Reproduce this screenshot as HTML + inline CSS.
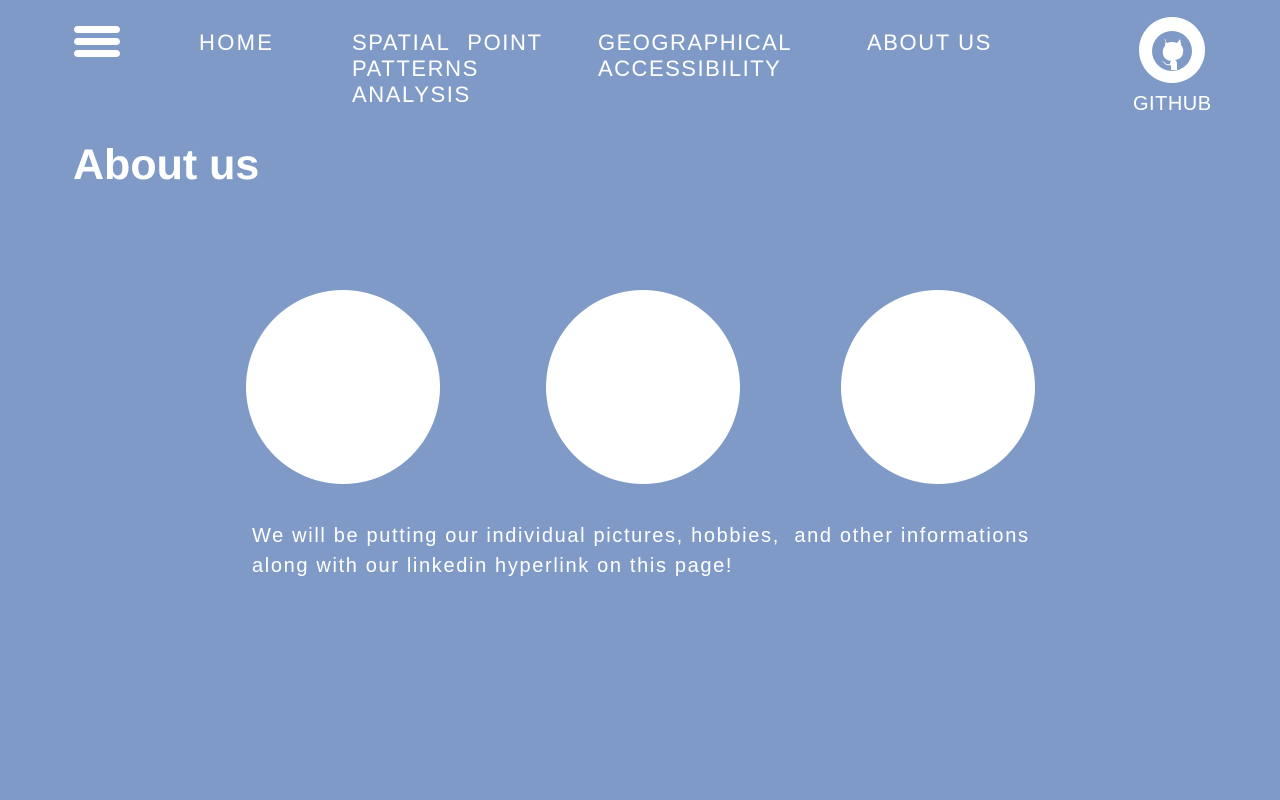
<!DOCTYPE html>
<html><head><meta charset="utf-8"><style>
body{margin:0;width:1280px;height:800px;background:#7f9ac6;font-family:"Liberation Sans",sans-serif;color:#fff;position:relative;overflow:hidden}
.a{position:absolute}
.bar{position:absolute;left:74px;width:46px;height:7px;background:#fff;border-radius:4px}
.nav{position:absolute;top:30px;font-size:22px;line-height:26px;letter-spacing:1.6px}
.c{position:absolute;top:290px;width:194px;height:194px;border-radius:50%;background:#fff}
</style></head><body>
<div class="bar" style="top:26px"></div>
<div class="bar" style="top:38px"></div>
<div class="bar" style="top:50px"></div>
<div class="nav" style="left:199px;letter-spacing:2.3px">HOME</div>
<div class="nav" style="left:352px;width:220px;word-spacing:10px">SPATIAL POINT<br><span style="word-spacing:0">PATTERNS<br>ANALYSIS</span></div>
<div class="nav" style="left:598px;letter-spacing:1.5px">GEOGRAPHICAL<br>ACCESSIBILITY</div>
<div class="nav" style="left:867px">ABOUT US</div>
<svg class="a" style="left:1139px;top:17px" width="66" height="66" viewBox="0 0 66 66">
<circle cx="33" cy="33" r="33" fill="#fff"/>
<circle cx="33" cy="34" r="20" fill="#7f9ac6"/>
<path d="M25 22 l3 4 q5-2 10 0 l3-4 q1 3 1 6 q3 3 2 8 q-1 6-8 7 q2 1 2 4 v6 h-6 v-5 q-4 1-6-1 q-2-3-4-3 q3 0 4 2 q2 2 5 1 q0-2 1-3 q-7-1-8-7 q-1-5 2-8 q0-3 1-6z" fill="#fff"/>
</svg>
<div class="a" style="left:1133px;top:93px;font-size:20px;letter-spacing:0.5px">GITHUB</div>
<div class="a" style="left:73px;top:141px;font-size:43px;font-weight:bold">About us</div>
<div class="c" style="left:246px"></div>
<div class="c" style="left:546px"></div>
<div class="c" style="left:841px"></div>
<div class="a" style="left:252px;top:521px;font-size:20px;line-height:30px;width:900px;letter-spacing:1.65px">We will be putting our individual pictures, hobbies,&nbsp; and other informations<br>along with our linkedin hyperlink on this page!</div>
</body></html>
